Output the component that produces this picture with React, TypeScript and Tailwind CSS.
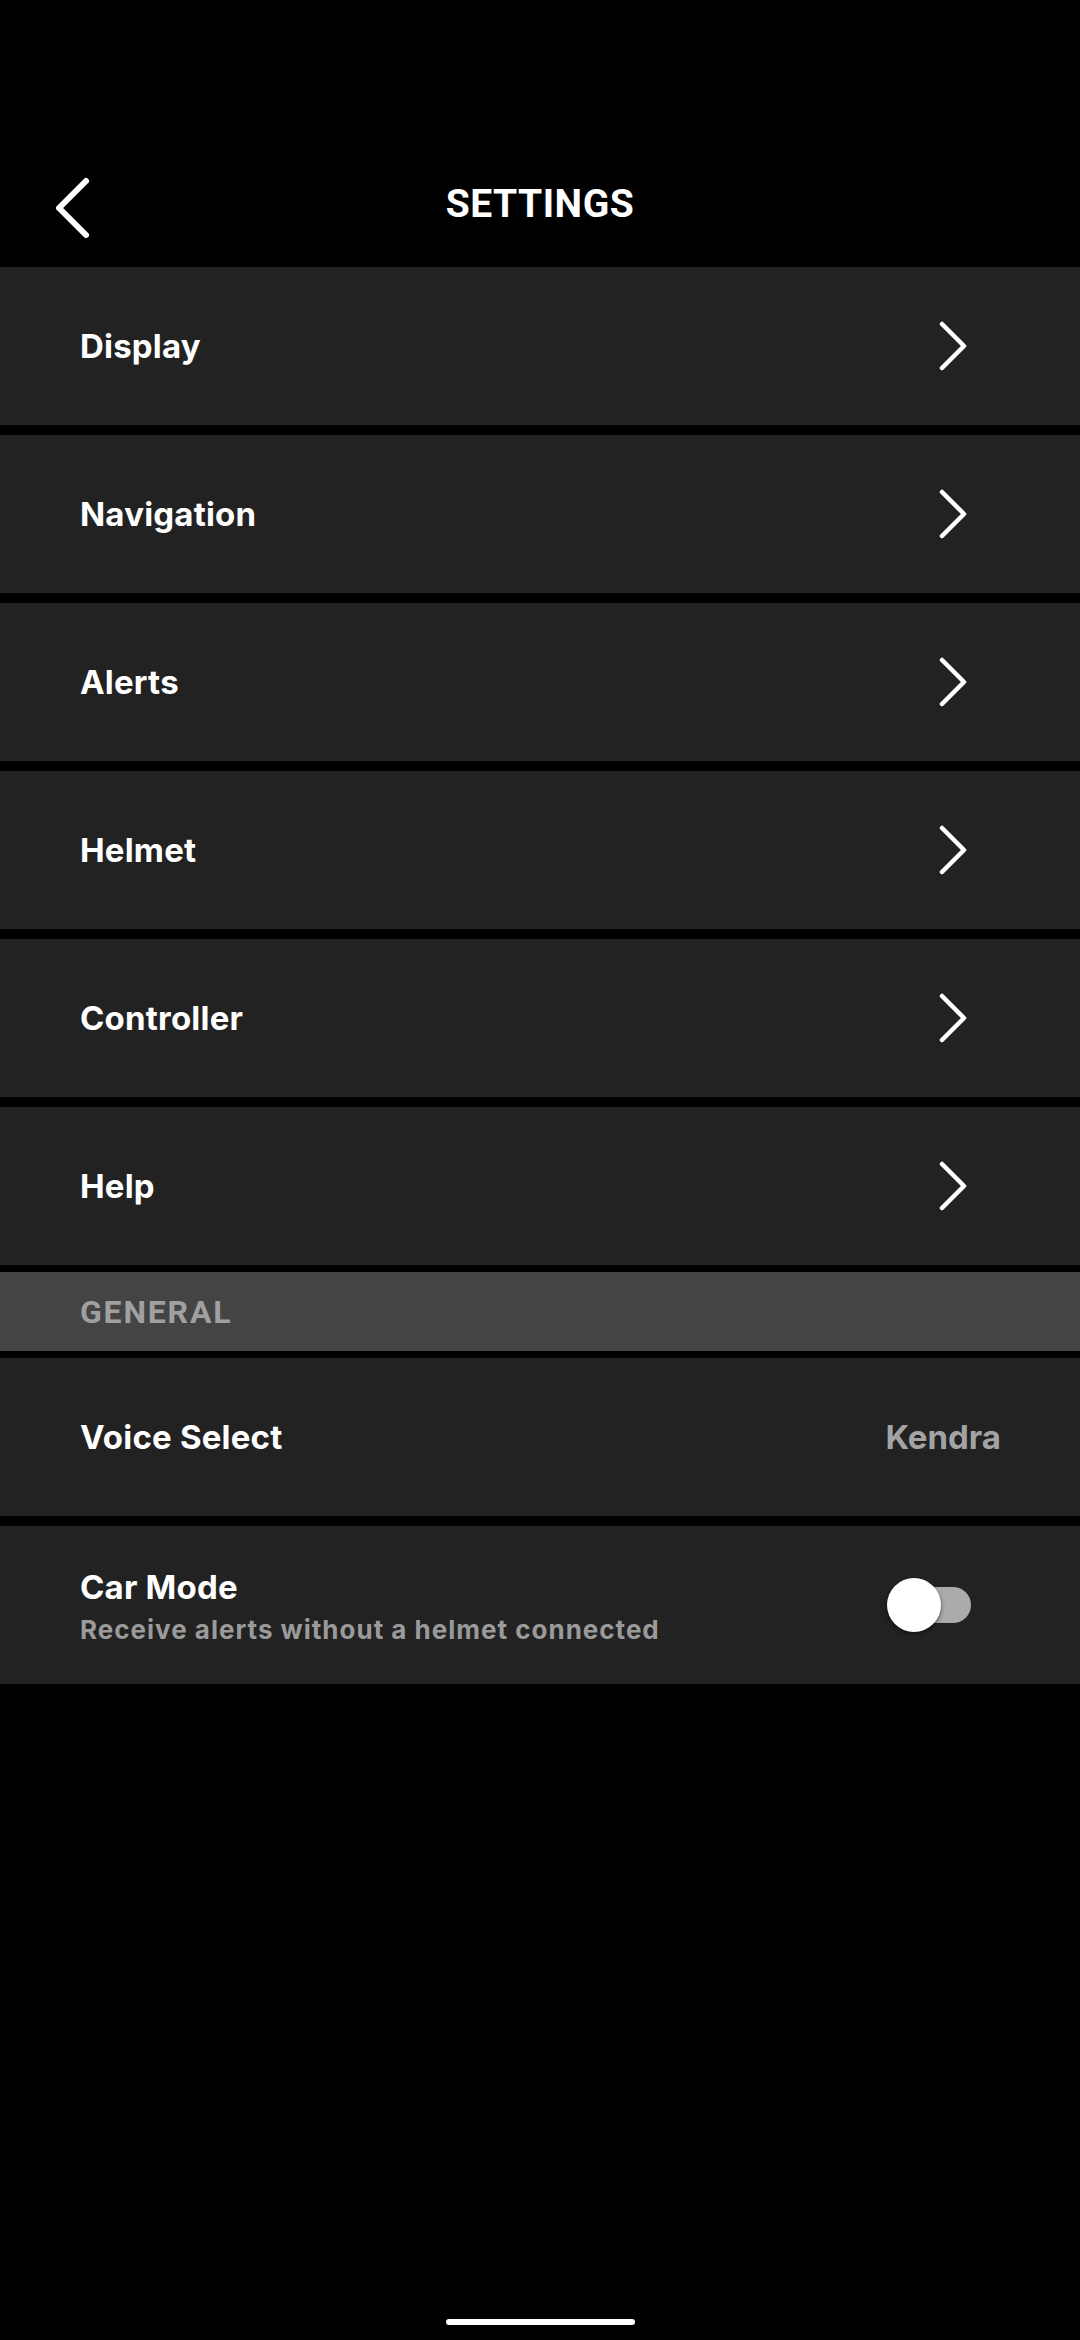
import React from "react";

const Chevron = () => (
  <svg width="28" height="52" viewBox="0 0 28 52" fill="none" className="shrink-0">
    <path d="M3 4 L25 26 L3 48" stroke="white" strokeWidth="4.5" strokeLinecap="round" strokeLinejoin="round" />
  </svg>
);

const NavRow = ({ label }: { label: string }) => (
  <div className="h-[158px] bg-[#222222] flex items-center justify-between pl-[80px] pr-[113px]">
    <span className="text-white text-[33px] font-bold leading-[40px] tracking-[0.2px]">
      {label}
    </span>
    <Chevron />
  </div>
);

export default function App() {
  const items = ["Display", "Navigation", "Alerts", "Helmet", "Controller", "Help"];
  return (
    <div className="w-[1080px] h-[2340px] bg-black flex flex-col" style={{ fontFamily: "Inter, 'Noto Sans', sans-serif" }}>
      {/* Header */}
      <div className="h-[267px] flex flex-col">
        <div className="mt-[140px] h-[127px] grid grid-cols-[1fr_auto_1fr] items-center">
          <div className="pl-[53px] pt-[8px] flex items-center">
            <svg width="40" height="66" viewBox="0 0 40 66" fill="none">
              <path d="M33 6 L6 33 L33 60" stroke="white" strokeWidth="6" strokeLinecap="round" strokeLinejoin="round" />
            </svg>
          </div>
          <span className="text-white text-[39px] font-bold leading-[48px] tracking-[0.5px]" style={{ fontFamily: "Roboto, 'Liberation Sans', sans-serif" }}>
            SETTINGS
          </span>
          <div />
        </div>
      </div>

      {/* Nav rows */}
      <div className="flex flex-col gap-[10px]">
        {items.map((it) => (
          <NavRow key={it} label={it} />
        ))}
      </div>

      {/* General header */}
      <div className="mt-[7px] h-[79px] bg-[#444444] flex items-center pl-[80px]">
        <span className="text-[#a0a0a0] text-[32px] font-bold leading-[40px] tracking-[1.8px]" style={{ fontFamily: "Roboto, 'Liberation Sans', sans-serif" }}>
          GENERAL
        </span>
      </div>

      {/* Voice select */}
      <div className="mt-[7px] h-[158px] bg-[#222222] flex items-center justify-between pl-[80px] pr-[79px]">
        <span className="text-white text-[33px] font-bold leading-[40px] tracking-[0.2px]">Voice Select</span>
        <span className="text-[#a3a3a3] text-[33px] font-bold leading-[40px]">Kendra</span>
      </div>

      {/* Car mode */}
      <div className="mt-[10px] h-[158px] bg-[#222222] flex items-center justify-between pl-[80px] pr-[109px]">
        <div className="flex flex-col mt-[7px]">
          <span className="text-white text-[33px] font-bold leading-[42px] tracking-[0.2px]">Car Mode</span>
          <span className="text-[#9a9a9a] text-[26px] font-bold leading-[43px] tracking-[1px]">Receive alerts without a helmet connected</span>
        </div>
        <div className="relative w-[84px] h-[54px]">
          <div className="absolute right-0 top-[9px] w-[70px] h-[36px] rounded-full bg-[#ababab]" />
          <div className="absolute left-0 top-0 w-[54px] h-[54px] rounded-full bg-white shadow-[0_2px_4px_rgba(0,0,0,0.5)]" />
        </div>
      </div>

      <div className="flex-1" />
      <div className="flex justify-center mb-[15px]">
        <div className="w-[189px] h-[6px] rounded-full bg-white" />
      </div>
    </div>
  );
}
